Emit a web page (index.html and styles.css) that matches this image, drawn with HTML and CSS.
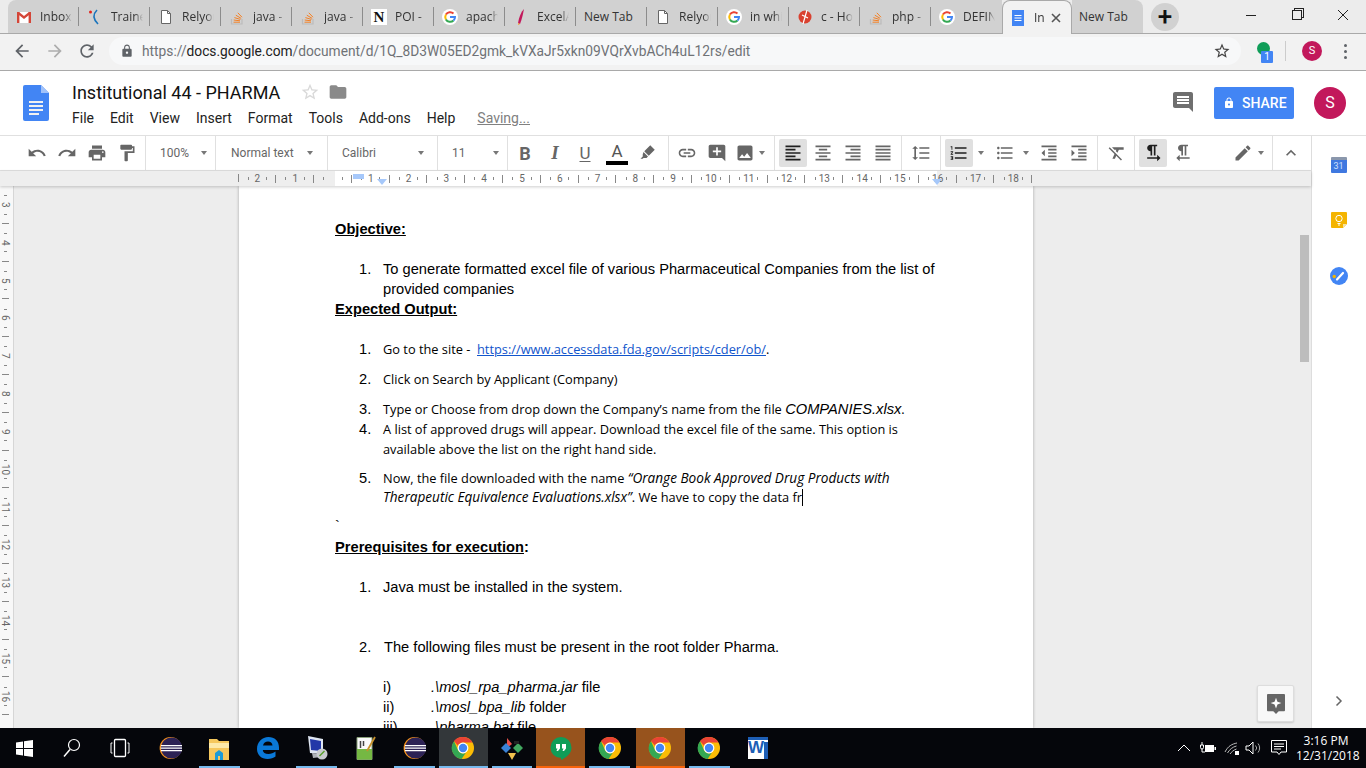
FILE: index.html
```html
<!DOCTYPE html>
<html lang="en">
<head>
  <meta charset="UTF-8">
  <title>Institutional 44 - PHARMA - Google Docs</title>
  <link rel="stylesheet" href="styles.css">
</head>
<body>

<svg class="defs" width="0" height="0">
  <symbol id="i-undo" viewBox="0 0 24 24"><path d="M12.5 8c-2.65 0-5.05.99-6.9 2.6L2 7v9h9l-3.62-3.62c1.39-1.16 3.16-1.88 5.12-1.88 3.54 0 6.55 2.31 7.6 5.5l2.37-.78C21.08 11.03 17.15 8 12.5 8z"/></symbol>
  <symbol id="i-redo" viewBox="0 0 24 24"><path d="M18.4 10.6C16.55 8.99 14.15 8 11.5 8c-4.65 0-8.58 3.03-9.96 7.22L3.9 16c1.05-3.19 4.05-5.5 7.6-5.5 1.95 0 3.73.72 5.12 1.88L13 16h9V7l-3.6 3.6z"/></symbol>
  <symbol id="i-print" viewBox="0 0 24 24"><path d="M19 8H5c-1.66 0-3 1.34-3 3v6h4v4h12v-4h4v-6c0-1.66-1.34-3-3-3zm-3 11H8v-5h8v5zm3-7c-.55 0-1-.45-1-1s.45-1 1-1 1 .45 1 1-.45 1-1 1zm-1-9H6v4h12V3z"/></symbol>
  <symbol id="i-paint" viewBox="0 0 24 24"><path d="M18 4V3c0-.55-.45-1-1-1H5c-.55 0-1 .45-1 1v4c0 .55.45 1 1 1h12c.55 0 1-.45 1-1V6h1v4H9v11c0 .55.45 1 1 1h2c.55 0 1-.45 1-1v-9h8V4h-3z"/></symbol>
  <symbol id="i-marker" viewBox="0 0 24 24"><path d="M15 3l6 6-8 8-6-6zM6 12l6 6-2 2H6l-1 1H2l3-3v-3z"/></symbol>
  <symbol id="i-link" viewBox="0 0 24 24"><path d="M3.9 12c0-1.71 1.39-3.1 3.1-3.1h4V7H7c-2.76 0-5 2.24-5 5s2.24 5 5 5h4v-1.9H7c-1.71 0-3.1-1.39-3.1-3.1zM8 13h8v-2H8v2zm9-6h-4v1.9h4c1.71 0 3.1 1.39 3.1 3.1s-1.39 3.1-3.1 3.1h-4V17h4c2.76 0 5-2.24 5-5s-2.24-5-5-5z"/></symbol>
  <symbol id="i-addc" viewBox="0 0 24 24"><path d="M21.99 4c0-1.1-.89-2-1.99-2H4c-1.1 0-2 .9-2 2v12c0 1.1.9 2 2 2h14l4 4-.01-18zM17 11h-4v4h-2v-4H7V9h4V5h2v4h4v2z"/></symbol>
  <symbol id="i-image" viewBox="0 0 24 24"><path d="M21 19V5c0-1.1-.9-2-2-2H5c-1.1 0-2 .9-2 2v14c0 1.1.9 2 2 2h14c1.1 0 2-.9 2-2zM8.5 13.5l2.5 3.01L14.5 12l4.5 6H5l3.5-4.5z"/></symbol>
  <symbol id="i-left" viewBox="0 0 24 24"><path d="M15 15H3v2h12v-2zm0-8H3v2h12V7zM3 13h18v-2H3v2zm0 8h18v-2H3v2zM3 3v2h18V3H3z"/></symbol>
  <symbol id="i-center" viewBox="0 0 24 24"><path d="M7 15v2h10v-2H7zm-4 6h18v-2H3v2zm0-8h18v-2H3v2zm4-6v2h10V7H7zM3 3v2h18V3H3z"/></symbol>
  <symbol id="i-right" viewBox="0 0 24 24"><path d="M3 21h18v-2H3v2zm6-4h12v-2H9v2zm-6-4h18v-2H3v2zm6-4h12V7H9v2zM3 3v2h18V3H3z"/></symbol>
  <symbol id="i-justify" viewBox="0 0 24 24"><path d="M3 21h18v-2H3v2zm0-4h18v-2H3v2zm0-4h18v-2H3v2zm0-4h18V7H3v2zm0-6v2h18V3H3z"/></symbol>
  <symbol id="i-spacing" viewBox="0 0 24 24"><path d="M6 7h2.5L5 3.5 1.5 7H4v10H1.5L5 20.5 8.5 17H6V7zm4-2v2h12V5H10zm0 14h12v-2H10v2zm0-6h12v-2H10v2z"/></symbol>
  <symbol id="i-numlist" viewBox="0 0 24 24"><path d="M2 17h2v.5H3v1h1v.5H2v1h3v-4H2v1zm1-9h1V4H2v1h1v3zm-1 3h1.8L2 13.1v.9h3v-1H3.2L5 10.9V10H2v1zm5-6v2h14V5H7zm0 14h14v-2H7v2zm0-6h14v-2H7v2z"/></symbol>
  <symbol id="i-bullets" viewBox="0 0 24 24"><path d="M4 10.5c-.83 0-1.5.67-1.5 1.5s.67 1.5 1.5 1.5 1.5-.67 1.5-1.5-.67-1.5-1.5-1.5zm0-6c-.83 0-1.5.67-1.5 1.5S3.17 7.5 4 7.5 5.5 6.83 5.5 6 4.83 4.5 4 4.5zm0 12c-.83 0-1.5.68-1.5 1.5s.68 1.5 1.5 1.5 1.5-.68 1.5-1.5-.67-1.5-1.5-1.5zM7 19h14v-2H7v2zm0-6h14v-2H7v2zm0-8v2h14V5H7z"/></symbol>
  <symbol id="i-outdent" viewBox="0 0 24 24"><path d="M11 17h10v-2H11v2zm-8-5l4 4V8l-4 4zm0 9h18v-2H3v2zM3 3v2h18V3H3zm8 6h10V7H11v2zm0 4h10v-2H11v2z"/></symbol>
  <symbol id="i-indent" viewBox="0 0 24 24"><path d="M3 21h18v-2H3v2zM3 8v8l4-4-4-4zm8 9h10v-2H11v2zM3 3v2h18V3H3zm8 6h10V7H11v2zm0 4h10v-2H11v2z"/></symbol>
  <symbol id="i-clear" viewBox="0 0 24 24"><path d="M3.27 5L2 6.27l6.97 6.97L6.5 19h3l1.57-3.66L16.73 21 18 19.73 3.55 5.27 3.27 5zM6 5v.18L8.82 8h2.4l-.72 1.68 2.1 2.1L14.21 8H20V5H6z"/></symbol>
  <symbol id="i-ltr" viewBox="0 0 24 24"><path d="M9 10v5h2V4h2v11h2V4h2V2H9C6.79 2 5 3.79 5 6s1.79 4 4 4zm12 8l-4-4v3H5v2h12v3l4-4z"/></symbol>
  <symbol id="i-rtl" viewBox="0 0 24 24"><path d="M10 10v5h2V4h2v11h2V4h2V2h-8C7.79 2 6 3.79 6 6s1.79 4 4 4zm-2 7v-3l-4 4 4 4v-3h12v-2H8z"/></symbol>
  <symbol id="i-edit" viewBox="0 0 24 24"><path d="M3 17.25V21h3.75L17.81 9.94l-3.75-3.75L3 17.25zM20.71 7.04c.39-.39.39-1.02 0-1.41l-2.34-2.34c-.39-.39-1.02-.39-1.41 0l-1.83 1.83 3.75 3.75 1.83-1.83z"/></symbol>
  <symbol id="i-up" viewBox="0 0 24 24"><path d="M12 8l-6 6 1.41 1.41L12 10.83l4.59 4.58L18 14z"/></symbol>
  <symbol id="i-comment" viewBox="0 0 24 24"><path d="M21.99 4c0-1.1-.89-2-1.99-2H4c-1.1 0-2 .9-2 2v12c0 1.1.9 2 2 2h14l4 4-.01-18zM18 14H6v-2h12v2zm0-3H6V9h12v2zm0-3H6V6h12v2z"/></symbol>
  <symbol id="i-lock" viewBox="0 0 24 24"><path d="M18 8h-1V6c0-2.76-2.24-5-5-5S7 3.24 7 6v2H6c-1.1 0-2 .9-2 2v10c0 1.1.9 2 2 2h12c1.1 0 2-.9 2-2V10c0-1.1-.9-2-2-2zm-6 9c-1.1 0-2-.9-2-2s.9-2 2-2 2 .9 2 2-.9 2-2 2zm3.1-9H8.9V6c0-1.71 1.39-3.1 3.1-3.1 1.71 0 3.1 1.39 3.1 3.1v2z"/></symbol>
  <symbol id="i-star" viewBox="0 0 24 24"><path d="M22 9.24l-7.19-.62L12 2 9.19 8.63 2 9.24l5.46 4.73L5.82 21 12 17.27 18.18 21l-1.63-7.03L22 9.24zM12 15.4l-3.76 2.27 1-4.28-3.32-2.88 4.38-.38L12 6.1l1.71 4.04 4.38.38-3.32 2.88 1 4.28L12 15.4z"/></symbol>
  <symbol id="i-folder" viewBox="0 0 24 24"><path d="M10 4H4c-1.1 0-1.99.9-1.99 2L2 18c0 1.1.9 2 2 2h16c1.1 0 2-.9 2-2V8c0-1.1-.9-2-2-2h-8l-2-2z"/></symbol>
  <symbol id="i-back" viewBox="0 0 24 24"><path d="M20 11H7.83l5.59-5.59L12 4l-8 8 8 8 1.41-1.41L7.83 13H20v-2z"/></symbol>
  <symbol id="i-forward" viewBox="0 0 24 24"><path d="M12 4l-1.41 1.41L16.17 11H4v2h12.17l-5.58 5.59L12 20l8-8z"/></symbol>
  <symbol id="i-reload" viewBox="0 0 24 24"><path d="M17.65 6.35C16.2 4.9 14.21 4 12 4c-4.42 0-7.99 3.58-7.99 8s3.57 8 7.99 8c3.73 0 6.84-2.55 7.73-6h-2.08c-.82 2.33-3.04 4-5.65 4-3.31 0-6-2.69-6-6s2.69-6 6-6c1.66 0 3.14.69 4.22 1.78L13 11h7V4l-2.35 2.35z"/></symbol>

  <symbol id="f-gmail" viewBox="0 0 16 16"><path fill="#fff" d="M1 3h14v11H1z"/><path fill="#d44638" d="M1 3h2.4v11H1zM12.6 3H15v11h-2.4z"/><path fill="#d44638" d="M1 3h2l5 4 5-4h2v1.5L8 10 1 4.5z"/></symbol>
  <symbol id="f-page" viewBox="0 0 16 16"><path fill="#fff" stroke="#666" d="M3.5 1.5h6l3 3v10h-9z"/><path fill="none" stroke="#666" d="M9.5 1.5v3h3"/></symbol>
  <symbol id="f-so" viewBox="0 0 16 16"><path fill="none" stroke="#bcbbbb" stroke-width="1.2" d="M2.5 10v5h10.5v-5"/><path fill="none" stroke="#f48024" d="M4.5 13.2h6.5M4.7 11l6.3.8M5.4 8.6l6 1.8M6.8 6.2l5.4 3.2M8.8 3.8l4.2 4.4"/></symbol>
  <symbol id="f-g" viewBox="0 0 16 16"><circle cx="8" cy="8" r="8" fill="#fff"/><path fill="none" stroke="#ea4335" stroke-width="2" d="M3.9 5.6A5 5 0 0 1 11.5 4.4"/><path fill="none" stroke="#fbbc05" stroke-width="2" d="M3.9 5.6a5 5 0 0 0 0 4.8"/><path fill="none" stroke="#34a853" stroke-width="2" d="M3.9 10.4a5 5 0 0 0 7.6 1.2"/><path fill="none" stroke="#4285f4" stroke-width="2" d="M8 8h5a5 5 0 0 1-1.5 3.6"/></symbol>
  <symbol id="f-doc" viewBox="0 0 16 16"><path fill="#4285f4" d="M2 0h12v16H2z"/><path fill="#fff" d="M4.5 5h7v1h-7zM4.5 7.5h7v1h-7zM4.5 10h7v1h-7z"/></symbol>
  <symbol id="t-chrome" viewBox="0 0 24 24"><circle cx="12" cy="12" r="11" fill="#fbbc05"/><path fill="#ea4335" d="M12 1a11 11 0 0 1 9.5 5.5H12a5.5 5.5 0 0 0-5 3.2L3 5a11 11 0 0 1 9-4z"/><path fill="#34a853" d="M3 5.2A11 11 0 0 0 10.6 22.9l4.2-6.2a5.5 5.5 0 0 1-7.6-2.2z"/><circle cx="12" cy="12" r="5.4" fill="#fff"/><circle cx="12" cy="12" r="4.2" fill="#4285f4"/></symbol>
  <symbol id="t-eclipse" viewBox="0 0 24 24"><circle cx="12.6" cy="12" r="11" fill="#f7941e"/><circle cx="13.6" cy="12" r="10.6" fill="#2c2255"/><path fill="#fff" d="M3 9h21v1.3H3zM2.6 11.5h21.8v1.3H2.6zM3 14h21v1.3H3z"/></symbol>
</svg>

<div class="tabstrip">
  <div class="tab"><svg class="fav"><use href="#f-gmail"/></svg><span class="tab-text">Inbox</span></div>
  <div class="tab"><svg class="fav" viewBox="0 0 16 16"><path fill="none" stroke="#1c75bc" stroke-width="1.6" d="M10 1C6 5 6 10 11 15"/><circle cx="3.5" cy="3" r="1.5" fill="#e2231a"/></svg><span class="tab-text">Trainee</span></div>
  <div class="tab"><svg class="fav"><use href="#f-page"/></svg><span class="tab-text">Relyon</span></div>
  <div class="tab"><svg class="fav"><use href="#f-so"/></svg><span class="tab-text">java -</span></div>
  <div class="tab"><svg class="fav"><use href="#f-so"/></svg><span class="tab-text">java -</span></div>
  <div class="tab"><span class="fav notion">N</span><span class="tab-text">POI -</span></div>
  <div class="tab"><svg class="fav"><use href="#f-g"/></svg><span class="tab-text">apach</span></div>
  <div class="tab"><svg class="fav" viewBox="0 0 16 16"><path fill="#c2185b" d="M11 0C8 3 6 8 5 14l2 1C9 10 10 5 11 0z"/><path fill="#f4a032" d="M5 14l2 1-2 1z"/></svg><span class="tab-text">ExcelA</span></div>
  <div class="tab plain"><span class="tab-text">New Tab</span></div>
  <div class="tab"><svg class="fav"><use href="#f-page"/></svg><span class="tab-text">Relyon</span></div>
  <div class="tab"><svg class="fav"><use href="#f-g"/></svg><span class="tab-text">in whi</span></div>
  <div class="tab"><svg class="fav" viewBox="0 0 16 16"><circle cx="8" cy="8" r="6.5" fill="#d9412f"/><path fill="none" stroke="#fff" stroke-width="1.2" d="M10 1L6 15M5 6l6 3"/></svg><span class="tab-text">c - Ho</span></div>
  <div class="tab"><svg class="fav"><use href="#f-so"/></svg><span class="tab-text">php -</span></div>
  <div class="tab no-sep"><svg class="fav"><use href="#f-g"/></svg><span class="tab-text">DEFIN</span></div>
  <div class="tab active"><svg class="fav"><use href="#f-doc"/></svg><span class="tab-text">In</span><svg class="tab-close" viewBox="0 0 10 10"><path fill="none" stroke="#555" stroke-width="1.6" d="M1 1l8 8M9 1L1 9"/></svg></div>
  <div class="tab plain last"><span class="tab-text">New Tab</span></div>
  <div class="newtab">+</div>
  <div class="winctl">
    <span class="win-btn"><i class="win-min"></i></span>
    <span class="win-btn"><i class="win-max"></i></span>
    <span class="win-btn"><svg width="12" height="12" viewBox="0 0 12 12"><path fill="none" stroke="#222" d="M1 1l10 10M11 1L1 11"/></svg></span>
  </div>
</div>

<div class="addressbar">
  <svg class="nav-icon"><use href="#i-back"/></svg>
  <svg class="nav-icon off"><use href="#i-forward"/></svg>
  <svg class="nav-icon reload"><use href="#i-reload"/></svg>
  <div class="omnibox">
    <svg class="omni-lock"><use href="#i-lock"/></svg>
    <div class="url">https://<b>docs.google.com</b>/document/d/1Q_8D3W05ED2gmk_kVXaJr5xkn09VQrXvbACh4uL12rs/edit</div>
    <svg class="omni-star"><use href="#i-star"/></svg>
  </div>
  <div class="ext"><i class="ext-dot"></i><span class="ext-badge">1</span></div>
  <i class="bar-sep"></i>
  <div class="chrome-avatar">S</div>
  <div class="dots"><i></i><i></i><i></i></div>
</div>

<div class="docs-header">
  <svg class="docs-logo" viewBox="0 0 26 36"><path fill="#4285f4" d="M2 0h16l8 8v26a2 2 0 0 1-2 2H2a2 2 0 0 1-2-2V2a2 2 0 0 1 2-2z"/><path fill="#a1c2fa" d="M18 0l8 8h-8z"/><path fill="#f1f1f1" d="M6 16h14v2H6zM6 20h14v2H6zM6 24h14v2H6zM6 28h10v2H6z"/></svg>
  <div class="title-block">
    <div class="title-row">
      <span class="doc-title">Institutional 44 - PHARMA</span>
      <svg class="title-star"><use href="#i-star"/></svg>
      <svg class="title-folder"><use href="#i-folder"/></svg>
    </div>
    <div class="menu">
      <span>File</span><span>Edit</span><span>View</span><span>Insert</span><span>Format</span><span>Tools</span><span>Add-ons</span><span>Help</span>
      <span class="saving">Saving...</span>
    </div>
  </div>
  <svg class="comment-btn"><use href="#i-comment"/></svg>
  <div class="share"><svg><use href="#i-lock"/></svg>SHARE</div>
  <div class="docs-avatar">S</div>
</div>

<div class="workspace">
  <div class="docs">
    <div class="toolbar">
      <div class="tgroup g-history">
        <span class="tb"><svg><use href="#i-undo"/></svg></span>
        <span class="tb"><svg><use href="#i-redo"/></svg></span>
        <span class="tb"><svg><use href="#i-print"/></svg></span>
        <span class="tb"><svg><use href="#i-paint"/></svg></span>
      </div>
      <div class="tgroup drop g-zoom"><span>100%</span><i class="caret"></i></div>
      <div class="tgroup drop g-style"><span>Normal text</span><i class="caret"></i></div>
      <div class="tgroup drop g-font"><span>Calibri</span><i class="caret"></i></div>
      <div class="tgroup drop g-size"><span>11</span><i class="caret"></i></div>
      <div class="tgroup g-text">
        <span class="tb letter bold">B</span>
        <span class="tb letter ital">I</span>
        <span class="tb letter under">U</span>
        <span class="tb letter color">A</span>
        <span class="tb tb-marker"><svg class="small"><use href="#i-marker"/></svg></span>
      </div>
      <div class="tgroup g-insert">
        <span class="tb"><svg><use href="#i-link"/></svg></span>
        <span class="tb"><svg><use href="#i-addc"/></svg></span>
        <span class="tb tb-narrow"><svg><use href="#i-image"/></svg></span>
        <i class="caret"></i>
      </div>
      <div class="tgroup g-align">
        <span class="tb on dark"><svg><use href="#i-left"/></svg></span>
        <span class="tb"><svg><use href="#i-center"/></svg></span>
        <span class="tb"><svg><use href="#i-right"/></svg></span>
        <span class="tb"><svg><use href="#i-justify"/></svg></span>
      </div>
      <div class="tgroup g-spacing"><span class="tb"><svg><use href="#i-spacing"/></svg></span></div>
      <div class="tgroup g-lists">
        <span class="tb on dark"><svg><use href="#i-numlist"/></svg></span>
        <i class="caret c-list"></i>
        <span class="tb"><svg><use href="#i-bullets"/></svg></span>
        <i class="caret c-bullet"></i>
        <span class="tb"><svg><use href="#i-outdent"/></svg></span>
        <span class="tb"><svg><use href="#i-indent"/></svg></span>
      </div>
      <div class="tgroup g-clear"><span class="tb"><svg><use href="#i-clear"/></svg></span></div>
      <div class="tgroup g-dir">
        <span class="tb on dark"><svg><use href="#i-ltr"/></svg></span>
        <span class="tb"><svg><use href="#i-rtl"/></svg></span>
        <span class="tb tb-edit"><svg><use href="#i-edit"/></svg></span>
        <i class="caret"></i>
      </div>
      <div class="tgroup g-collapse"><span class="tb"><svg><use href="#i-up"/></svg></span></div>
    </div>

    <div class="ruler">
      <span>2</span><span>1</span><span></span><span>1</span><span>2</span><span>3</span><span>4</span><span>5</span><span>6</span><span>7</span><span>8</span><span>9</span><span>10</span><span>11</span><span>12</span><span>13</span><span>14</span><span>15</span><span>16</span><span>17</span><span>18</span>
      <i class="indent-first"></i>
      <i class="indent-left"></i>
      <i class="indent-right"></i>
    </div>

    <div class="canvas">
      <div class="vruler">
        <span>3</span><span>4</span><span>5</span><span>6</span><span>7</span><span>8</span><span>9</span><span>10</span><span>11</span><span>12</span><span>13</span><span>14</span><span>15</span><span>16</span>
      </div>
      <div class="page">
        <div class="line head">Objective:</div>
        <div class="line li gap20"><span class="num">1.</span><span>To generate formatted excel file of various Pharmaceutical Companies from the list of</span></div>
        <div class="line cont">provided companies</div>
        <div class="line head">Expected Output:</div>

        <div class="line li cal gap20"><span class="num">1.</span><span>Go to the site -&nbsp; <a class="doclink">https://www.accessdata.fda.gov/scripts/cder/ob/</a>.</span></div>
        <div class="line li cal gap10"><span class="num">2.</span><span>Click on Search by Applicant (Company)</span></div>
        <div class="line li cal gap10"><span class="num">3.</span><span>Type or Choose from drop down the Company’s name from the file <em class="arial">COMPANIES.xlsx</em>.</span></div>
        <div class="line li cal"><span class="num">4.</span><span>A list of approved drugs will appear. Download the excel file of the same. This option is</span></div>
        <div class="line cont cal">available above the list on the right hand side.</div>
        <div class="line li cal gap9"><span class="num">5.</span><span>Now, the file downloaded with the name <em>“Orange Book Approved Drug Products with</em></span></div>
        <div class="line cont cal short"><em>Therapeutic Equivalence Evaluations.xlsx”</em>. We have to copy the data fr<i class="cursor"></i></div>
        <div class="line tick">`</div>

        <div class="line head after-tick">Prerequisites for execution<span class="plain-colon">:</span></div>
        <div class="line li gap20"><span class="num">1.</span><span>Java must be installed in the system.</span></div>
        <div class="line li gap40"><span class="num">2.</span><span class="shift">The following files must be present in the root folder Pharma.</span></div>
        <div class="line roman gap20"><span class="rnum">i)</span><span><em>.\mosl_rpa_pharma.jar</em> file</span></div>
        <div class="line roman"><span class="rnum">ii)</span><span><em>.\mosl_bpa_lib</em> folder</span></div>
        <div class="line roman"><span class="rnum">iii)</span><span><em>.\pharma.bat</em> file</span></div>
      </div>
      <i class="thumb"></i>
      <div class="explore">
        <svg viewBox="0 0 20 22" width="18" height="20"><path fill="#666" d="M1 0h18a1 1 0 0 1 1 1v17a1 1 0 0 1-1 1h-6l-3 3-3-3H1a1 1 0 0 1-1-1V1a1 1 0 0 1 1-1z"/><path fill="#fff" d="M10 4l1.6 4.4L16 10l-4.4 1.6L10 16l-1.6-4.4L4 10l4.4-1.6z"/></svg>
      </div>
    </div>
  </div>

  <div class="side">
    <div class="side-cal">31</div>
    <svg class="side-keep" viewBox="0 0 16 16"><path fill="#f4b400" d="M1 0h14a1 1 0 0 1 1 1v11l-4 4H1a1 1 0 0 1-1-1V1a1 1 0 0 1 1-1z"/><path fill="#f7e3a1" d="M16 12h-4v4z"/><circle cx="8" cy="6.5" r="3.2" fill="none" stroke="#fff"/><path stroke="#fff" d="M6.5 11.5h3M7 13h2"/></svg>
    <svg class="side-tasks" viewBox="0 0 18 18"><circle cx="9" cy="9" r="9" fill="#4285f4"/><path fill="none" stroke="#fff" stroke-width="2.2" stroke-linecap="round" d="M7 12.5l6-6.5"/><circle cx="4.2" cy="9.5" r="1.7" fill="#f4b400"/></svg>
    <svg class="side-more" viewBox="0 0 12 12"><path fill="none" stroke="#666" stroke-width="1.5" d="M3.5 1.5L8 6l-4.5 4.5"/></svg>
  </div>
</div>

<div class="taskbar">
  <div class="task"><svg width="17" height="17" viewBox="0 0 17 17"><path fill="#fff" d="M0 2.4l7-1v6.600H0zM8 1.200L17 0v8H8zM0 9h7v6.600l-7-1zM8 9h9v8l-9-1.200z"/></svg></div>
  <div class="task"><svg width="18" height="20" viewBox="0 0 18 20"><circle cx="11" cy="7" r="5.5" fill="none" stroke="#fff" stroke-width="1.2"/><path stroke="#fff" stroke-width="1.5" d="M7 11.5L1 18.5"/></svg></div>
  <div class="task"><svg width="20" height="20" viewBox="0 0 20 20"><rect x="4.5" y="1.5" width="11" height="17" rx="1" fill="none" stroke="#fff" stroke-width="1.3"/><path stroke="#fff" d="M1 5v10M1 5h1.5M1 15h1.5M19 5v10M19 5h-1.5M19 15h-1.5"/></svg></div>
  <div class="task eclipse-slot"><svg class="app"><use href="#t-eclipse"/></svg></div>
  <div class="task run"><svg class="app" viewBox="0 0 24 24"><path fill="#f5c75d" d="M2 3h8l2 2h10v19H2z"/><path fill="#fde9a9" d="M2 7h20v5H2z"/><path fill="#1b9bd8" d="M8 24v-7l4-3 4 3v7h-3v-4h-2v4z"/></svg></div>
  <div class="task"><svg class="app" viewBox="0 0 24 24"><path fill="#0a78d7" d="M12.5 1C6 1 1 6 1 13c0 6 4.5 10 10.5 10 3.5 0 6-1 8-2.5v-5c-2 1.5-4.5 2.5-7 2.5-3.5 0-5.5-1.5-5.7-4H23v-2.5C23 5 18.5 1 12.5 1zM7 9.5C7.5 7 9.5 5.5 12 5.5s4.3 1.5 4.5 4z"/></svg></div>
  <div class="task run"><svg class="app" viewBox="0 0 24 24"><path fill="#dfe6f2" d="M3 0l15 3v15L5 17z"/><path fill="#2338a8" d="M5 3l11 2v10L6 14z"/><path fill="#aeb2b8" d="M7 17l9 1v3l-8 1z"/><circle cx="17" cy="18" r="5.5" fill="#c9ccd0"/><path stroke="#5aa02c" stroke-width="1.5" d="M14.5 20l5-5"/></svg></div>
  <div class="task"><svg class="app" viewBox="0 0 24 24"><path fill="#fafafa" stroke="#8aa07a" d="M3 1.5h15v22H3z"/><path fill="#75b843" d="M3 13h15v10.5H3z"/><path stroke="#444" stroke-width="1.5" d="M6.5 5v7M9.5 5v5"/><path stroke="#c8912c" stroke-width="1.8" d="M13 15l8-14"/></svg></div>
  <div class="task run"><svg class="app"><use href="#t-eclipse"/></svg></div>
  <div class="task run cur"><svg class="app"><use href="#t-chrome"/></svg></div>
  <div class="task run"><svg class="app" viewBox="0 0 24 24"><path fill="#e8504a" d="M7 2l5 6-5 4z"/><path fill="#3b82d6" d="M1 12l5-5 5 5-5 5z"/><path fill="#41a85f" d="M13 12l5-5 5 5-5 5z"/><path fill="#f2c14e" d="M8 17h8l-4 7z"/><path fill="#222" d="M14 5h5v3h-5z"/></svg></div>
  <div class="task run attn"><svg class="app" viewBox="0 0 24 24"><path fill="#0f9d58" d="M12 1a10.5 10.5 0 0 1 10.5 10.5c0 6-5 10-10.5 12.5v-2A10.5 10.5 0 0 1 12 1z"/><path fill="#fff" d="M7 8h4v4.5l-2 2.5H7.5l1-2.5H7zM13 8h4v4.5l-2 2.5h-1.5l1-2.5H13z"/></svg></div>
  <div class="task run"><svg class="app"><use href="#t-chrome"/></svg></div>
  <div class="task run attn second"><svg class="app"><use href="#t-chrome"/></svg></div>
  <div class="task run"><svg class="app"><use href="#t-chrome"/></svg></div>
  <div class="task"><svg class="app" viewBox="0 0 24 24"><path fill="#fff" d="M2 1h20v22H2z"/><path fill="#1d5eb5" d="M2 1h20v3H2zM18 6h4v17h-4z"/><text x="2" y="17" class="word-w">W</text></svg></div>

  <div class="tray">
    <svg width="14" height="8" viewBox="0 0 14 8"><path fill="none" stroke="#fff" d="M1 7l6-6 6 6"/></svg>
    <svg width="17" height="12" viewBox="0 0 17 12"><path fill="#fff" d="M6 3h9v7H6zM15.5 5H17v3h-1.5z"/><path fill="none" stroke="#fff" d="M3 0v3M1.5 3h3v2.5a1.5 1.5 0 0 1-3 0zM3 7v3h3"/></svg>
    <svg width="16" height="14" viewBox="0 0 16 14"><path fill="none" stroke="#bbb" d="M1 11C4 5 8 3 13 2M3.5 12c2-3.5 5-6 9-7M6 13c1.5-2 3.5-4 6.5-5"/><path fill="#fff" d="M11 10h4v4h-4z"/></svg>
    <svg class="tray-sound" width="18" height="14" viewBox="0 0 18 14"><path fill="none" stroke="#fff" d="M1 5h3l4-4v12l-4-4H1z"/><path fill="none" stroke="#aaa" d="M10.5 4.5a3.5 3.5 0 0 1 0 5M13 2.5a7 7 0 0 1 0 9"/></svg>
    <svg width="16" height="16" viewBox="0 0 16 16"><path fill="none" stroke="#fff" d="M.5.5h15V12H10l-2 2.500L6 12H.5z"/><path stroke="#fff" d="M3 4h10M3 6.500h10M3 9h7"/></svg>
    <div class="clock"><div>3:16 PM</div><div>12/31/2018</div></div>
  </div>
</div>

</body>
</html>
```

FILE: styles.css
```css
* {
  box-sizing: border-box;
}
html, body {
  height: 768px;
  overflow: hidden;
}
body {
  margin: 0;
  font-family: Roboto, Arial, sans-serif;
  color: #222;
  background: #fff;
  display: flex;
  flex-direction: column;
}
.defs {
  position: absolute;
}
i {
  display: block;
}

/* browser tabs */
.tabstrip {
  height: 34px;
  flex: none;
  display: flex;
  padding-left: 8px;
  background: #ececec;
  border-bottom: 1px solid #a9a9a9;
}
.tab {
  width: 71px;
  height: 33px;
  flex: none;
  display: flex;
  align-items: center;
  padding-left: 8px;
  background: #d1d1d1;
  position: relative;
  font-family: "Open Sans", sans-serif;
  font-size: 12px;
  color: #333;
}
.tab:first-child {
  border-top-left-radius: 8px;
}
.tab::after {
  content: "";
  position: absolute;
  right: 0;
  top: 7px;
  height: 19px;
  width: 1px;
  background: #8c8c8c;
}
.tab.no-sep::after, .tab.active::after, .tab.last::after {
  display: none;
}
.tab.last {
  border-top-right-radius: 8px;
  padding-left: 7px;
}
.tab.active {
  background: #f2f2f2;
  height: 34px;
  width: 70px;
  z-index: 1;
  padding-left: 7px;
  border: 1px solid #a9a9a9;
  border-bottom: 0;
  border-radius: 8px 8px 0 0;
}
.fav {
  width: 16px;
  height: 16px;
  flex: none;
  margin-right: 8px;
}
.notion {
  background: #fff;
  color: #111;
  font: bold 15px/16px "Liberation Serif", serif;
  text-align: center;
}
.tab-text {
  white-space: nowrap;
  overflow: hidden;
  width: 32px;
  flex: none;
  -webkit-mask-image: linear-gradient(to right, #000 75%, transparent);
  mask-image: linear-gradient(to right, #000 75%, transparent);
}
.tab.plain .tab-text {
  width: 55px;
  -webkit-mask-image: none;
  mask-image: none;
}
.tab.active .tab-text {
  width: 14px;
}
.tab-close {
  width: 10px;
  height: 10px;
  margin-left: 3px;
  flex: none;
}
.newtab {
  width: 28px;
  height: 28px;
  border-radius: 50%;
  background: #d1d1d1;
  margin: 3px 0 0 8px;
  flex: none;
  text-align: center;
  font: 500 26px/26px Roboto, sans-serif;
  color: #111;
}
.winctl {
  margin-left: auto;
  display: flex;
}
.win-btn {
  width: 46px;
  height: 30px;
  display: flex;
  align-items: center;
  justify-content: center;
}
.win-min {
  width: 10px;
  height: 1px;
  background: #222;
}
.win-max {
  width: 10px;
  height: 10px;
  border: 1px solid #222;
  box-shadow: 2px -2px 0 -1px #ececec, 2px -2px 0 0 #222;
}

/* address bar */
.addressbar {
  height: 36px;
  flex: none;
  display: flex;
  align-items: center;
  padding: 0 0 2px 12px;
  background: #f2f2f2;
}
.nav-icon {
  width: 20px;
  height: 20px;
  fill: #5f6368;
  margin-right: 13px;
  flex: none;
}
.nav-icon.off {
  fill: #adadad;
  margin-right: 12px;
}
.nav-icon.reload {
  margin-right: 12px;
}
.omnibox {
  width: 1132px;
  height: 28px;
  border-radius: 14px;
  background: #f7f8f9;
  display: flex;
  align-items: center;
  padding-left: 11px;
  flex: none;
}
.omni-lock {
  width: 14px;
  height: 14px;
  fill: #5f6368;
  flex: none;
}
.url {
  margin-left: 8px;
  font-size: 13.75px;
  color: #6f7276;
  white-space: nowrap;
}
.url b {
  font-weight: 400;
  color: #222;
}
.omni-star {
  width: 18px;
  height: 18px;
  fill: #444;
  margin-left: auto;
  margin-right: 10px;
}
.ext {
  width: 24px;
  height: 24px;
  margin-left: 11px;
  position: relative;
  flex: none;
}
.ext-dot {
  width: 13px;
  height: 13px;
  margin: 3px 0 0 5px;
  border-radius: 50%;
  background: #0f9d58;
}
.ext-badge {
  position: absolute;
  left: 9px;
  top: 12px;
  width: 12px;
  height: 12px;
  background: #4285f4;
  color: #fff;
  font-size: 10px;
  line-height: 12px;
  text-align: center;
  border-radius: 1px;
}
.bar-sep {
  width: 1px;
  height: 20px;
  background: #ccc;
  margin-left: 9px;
  flex: none;
}
.chrome-avatar {
  width: 20px;
  height: 20px;
  margin-left: 16px;
  border-radius: 50%;
  background: #c2185b;
  color: #fff;
  font-size: 11px;
  line-height: 20px;
  text-align: center;
  flex: none;
}
.dots {
  margin-left: 22px;
  display: flex;
  flex-direction: column;
  gap: 3px;
}
.dots i {
  width: 3px;
  height: 3px;
  border-radius: 50%;
  background: #5f6368;
}

/* docs header */
.docs-header {
  height: 65px;
  flex: none;
  display: flex;
  align-items: flex-start;
  padding-left: 23px;
  border-top: 1px solid #a9a9a9;
  background: #fff;
}
.docs-logo {
  width: 26px;
  height: 36px;
  margin-top: 14px;
  flex: none;
}
.title-block {
  margin-left: 23px;
  width: 1000px;
  flex: none;
}
.title-row {
  height: 26px;
  margin-top: 8px;
  display: flex;
  align-items: center;
}
.doc-title {
  font-size: 18px;
  color: #111;
}
.title-star {
  width: 20px;
  height: 20px;
  margin-left: 20px;
  fill: #d9d9d9;
}
.title-folder {
  width: 20px;
  height: 20px;
  margin-left: 8px;
  fill: #8a8a8a;
}
.menu {
  display: flex;
  gap: 16px;
  font-size: 14px;
  line-height: 18px;
  margin-top: 4px;
  color: #222;
}
.saving {
  color: #808080;
  text-decoration: underline;
  margin-left: 6px;
}
.comment-btn {
  width: 24px;
  height: 24px;
  fill: #6f6f6f;
  margin: 19px 0 0 99px;
  flex: none;
}
.share {
  width: 80px;
  height: 32px;
  margin: 16px 0 0 19px;
  flex: none;
  background: #4285f4;
  border-radius: 2px;
  color: #fff;
  font-size: 14px;
  font-weight: 500;
  display: flex;
  align-items: center;
  padding-left: 9px;
}
.share svg {
  width: 12px;
  height: 12px;
  fill: #fff;
  margin-right: 7px;
}
.docs-avatar {
  width: 32px;
  height: 32px;
  margin: 16px 0 0 20px;
  flex: none;
  border-radius: 50%;
  background: #c2185b;
  color: #fff;
  font-size: 16px;
  line-height: 32px;
  text-align: center;
}

/* everything below the header */
.workspace {
  flex: 1;
  min-height: 0;
  display: flex;
}
.docs {
  width: 1311px;
  flex: none;
  display: flex;
  flex-direction: column;
}
.side {
  flex: 1;
  border-top: 1px solid #e0e0e0;
  border-left: 1px solid #ddd;
  position: relative;
  display: flex;
  flex-direction: column;
  align-items: center;
  padding-right: 1px;
}
.side-cal {
  width: 16px;
  height: 16px;
  margin-top: 21px;
  background: #3f78e0;
  border-top: 3px solid #8a97ac;
  border-radius: 1px;
  color: #cfe0ff;
  font-size: 9px;
  line-height: 13px;
  text-align: center;
}
.side-keep {
  width: 16px;
  height: 16px;
  margin-top: 39px;
}
.side-tasks {
  width: 18px;
  height: 18px;
  margin-top: 39px;
}
.side-more {
  width: 12px;
  height: 12px;
  position: absolute;
  left: 21px;
  top: 559px;
}

/* toolbar */
.toolbar {
  height: 36px;
  flex: none;
  display: flex;
  border-top: 1px solid #e0e0e0;
  border-bottom: 1px solid #e0e0e0;
  color: #666;
  font-size: 12px;
}
.tgroup {
  height: 100%;
  flex: none;
  display: flex;
  align-items: center;
  border-right: 1px solid #e0e0e0;
}
.g-history { width: 146px; padding-left: 22px; }
.g-zoom { width: 70px; padding-left: 14px; }
.g-style { width: 112px; padding-left: 15px; }
.g-font { width: 110px; padding-left: 14px; }
.g-size { width: 70px; padding-left: 14px; }
.g-text { width: 161px; padding-left: 2px; }
.g-insert { width: 106px; padding-left: 3px; }
.g-align { width: 127px; padding-left: 3px; }
.g-spacing { width: 39px; padding-left: 4px; }
.g-lists { width: 157px; padding-left: 3px; }
.g-clear { width: 37px; padding-left: 4px; }
.g-dir { width: 138px; padding-left: 3px; }
.g-collapse { width: 38px; padding-left: 3px; border-right: 0; }
.tb {
  width: 30px;
  height: 28px;
  flex: none;
  display: flex;
  align-items: center;
  justify-content: center;
  fill: #666;
}
.tb svg {
  width: 20px;
  height: 20px;
}
.tb svg.small {
  width: 18px;
  height: 18px;
  margin-top: -3px;
}
.tb.on {
  width: 28px;
  margin: 0 1px;
  background: #e0e0e0;
  border-radius: 2px;
}
.tb.dark {
  fill: #1f1f1f;
}
.tb-narrow {
  width: 26px;
}
.tb-edit {
  margin-left: 30px;
}
.tb-marker {
  margin-left: 1px;
}
.caret {
  width: 0;
  height: 0;
  border: 3.5px solid transparent;
  border-top: 4px solid #777;
  border-bottom: 0;
  flex: none;
}
.drop .caret {
  margin-left: auto;
  margin-right: 8px;
}
.g-style .caret {
  margin-right: 14px;
}
.g-font .caret {
  margin-right: 13px;
}
.g-insert .caret {
  margin-left: 1px;
}
.g-lists .caret {
  margin: 0 6px 0 4px;
}
.g-lists .c-bullet {
  margin: 0 5px 0 3px;
}
.g-dir .caret {
  margin-left: 0;
}
.letter {
  font-size: 17px;
  color: #666;
  position: relative;
}
.bold {
  font-weight: 700;
  font-size: 18px;
}
.ital {
  font-style: italic;
  font-weight: 700;
  font-family: "Liberation Serif", serif;
  font-size: 19px;
}
.under {
  text-decoration: underline;
  text-underline-offset: 2px;
}
.color {
  padding-bottom: 5px;
  margin-left: 2px;
  font-size: 17px;
  color: #555;
}
.color::after {
  content: "";
  position: absolute;
  left: 4px;
  bottom: 2px;
  width: 22px;
  height: 4px;
  background: #000;
}

/* rulers */
.ruler {
  height: 15px;
  flex: none;
  display: flex;
  padding-left: 238.5px;
  position: relative;
  z-index: 2;
  background: linear-gradient(to right, #eee 335px, #fff 335px, #fff 937px, #eee 937px);
  box-shadow: 0 1px 3px rgba(0, 0, 0, .2);
  font-size: 10px;
  color: #666;
}
.ruler span {
  width: 37.8px;
  flex: none;
  text-align: center;
  line-height: 15px;
  background:
    linear-gradient(#888, #888) 25% 50% / 1px 3px no-repeat,
    linear-gradient(#888, #888) 75% 50% / 1px 3px no-repeat,
    linear-gradient(#888, #888) 100% 50% / 1px 8px no-repeat;
}
.ruler::before {
  content: "";
  position: absolute;
  left: 238px;
  top: 3px;
  width: 1px;
  height: 8px;
  background: #888;
}
.indent-first {
  position: absolute;
  left: 353px;
  top: 3px;
  width: 11px;
  height: 5px;
  background: #a6c8fa;
}
.indent-left, .indent-right {
  position: absolute;
  top: 8px;
  width: 0;
  height: 0;
  border: 5px solid transparent;
  border-top: 6px solid #a6c8fa;
  border-bottom: 0;
}
.indent-left {
  left: 377px;
}
.indent-right {
  left: 932px;
}
.canvas {
  flex: 1;
  min-height: 0;
  display: flex;
  overflow: hidden;
  position: relative;
  background: #ededed;
}
.vruler {
  width: 14px;
  flex: none;
  background: #f8f8f8;
  border-right: 1px solid #d6d6d6;
  font-size: 10px;
  color: #666;
}
.vruler span {
  display: flex;
  align-items: center;
  justify-content: center;
  height: 37.8px;
  writing-mode: vertical-rl;
  background:
    linear-gradient(#888, #888) 50% 25% / 3px 1px no-repeat,
    linear-gradient(#888, #888) 50% 75% / 3px 1px no-repeat,
    linear-gradient(#888, #888) 50% 100% / 7px 1px no-repeat;
}

/* document page */
.page {
  width: 794px;
  margin-left: 225px;
  flex: none;
  background: #fff;
  box-shadow: 0 0 3px rgba(0, 0, 0, .3);
  padding: 33px 0 0 96px;
  font-family: "Liberation Sans", Arial, sans-serif;
  font-size: 14.67px;
  color: #000;
}
.line {
  height: 20px;
  line-height: 20px;
  white-space: nowrap;
}
.head {
  font-weight: 700;
  text-decoration: underline;
}
.plain-colon {
  display: inline-block;
  text-decoration: none;
}
.li {
  display: flex;
}
.num {
  width: 48px;
  flex: none;
  padding-left: 24px;
  font-family: "Liberation Sans", Arial, sans-serif;
  font-size: 14.67px;
  font-style: normal;
}
.cont {
  padding-left: 48px;
}
.cal {
  font-family: "Open Sans", sans-serif;
  font-size: 12.8px;
}
.cal em {
  font-size: 13.6px;
  line-height: 0;
}
.cal em.arial {
  font-family: "Liberation Sans", Arial, sans-serif;
  font-size: 14.67px;
}
.doclink {
  color: #1155cc;
  text-decoration: underline;
}
.short {
  height: 19px;
  line-height: 18px;
}
.cursor {
  display: inline-block;
  width: 1px;
  height: 17px;
  background: #000;
  vertical-align: -4px;
}
.tick {
  margin-top: 9px;
  height: 20px;
}
.after-tick {
  margin-top: 1px;
}
.gap9 { margin-top: 9px; }
.gap10 { margin-top: 10px; }
.gap20 { margin-top: 20px; }
.gap40 { margin-top: 40px; }
.shift {
  margin-left: 1px;
}
.roman {
  display: flex;
  padding-left: 48px;
}
.rnum {
  width: 48px;
  flex: none;
}
.thumb {
  position: absolute;
  left: 1300px;
  top: 49px;
  width: 9px;
  height: 127px;
  background: #bdbdbd;
}
.explore {
  position: absolute;
  left: 1257px;
  top: 499px;
  width: 37px;
  height: 37px;
  background: #f8f8f8;
  border: 1px solid #ddd;
  border-radius: 2px;
  box-shadow: 0 1px 2px rgba(0, 0, 0, .15);
  display: flex;
  align-items: center;
  justify-content: center;
}

/* windows taskbar */
.taskbar {
  height: 40px;
  flex: none;
  display: flex;
  background: #05060b;
}
.task {
  width: 48.8px;
  height: 40px;
  flex: none;
  display: flex;
  align-items: center;
  justify-content: center;
  position: relative;
}
.task:nth-child(-n+3) {
  width: 48px;
}
.eclipse-slot {
  margin-left: 2px;
}
.task.run::after {
  content: "";
  position: absolute;
  left: 4px;
  right: 4px;
  bottom: 0;
  height: 2px;
  background: #76b9ed;
}
.task.cur {
  background: #33373a;
}
.task.cur::after, .task.attn::after {
  left: 0;
  right: 0;
}
.task.attn {
  background: #97531d;
}
.task.attn::after {
  background: #f7630c;
}
.task.second {
  margin-left: 2px;
}
.app {
  width: 24px;
  height: 24px;
}
.word-w {
  font: bold 17px "Liberation Sans", Arial, sans-serif;
  fill: #1d5eb5;
}
.tray {
  margin-left: auto;
  padding-right: 10px;
  display: flex;
  align-items: center;
  gap: 8px;
}
.tray-sound {
  margin-left: -3px;
}
.clock {
  width: 60px;
  margin-left: 1px;
  text-align: center;
  font-family: "Open Sans", sans-serif;
  font-size: 12px;
  line-height: 15px;
  color: #fff;
  white-space: nowrap;
}
```
